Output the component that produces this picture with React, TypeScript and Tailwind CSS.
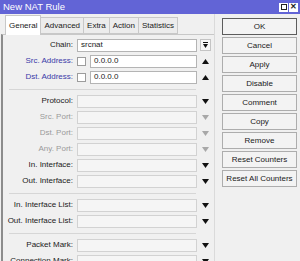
import React from "react";

type Row = { label: string; kind: "chain" | "addr" | "empty"; tone?: "blue" | "gray" | "black"; value?: string; arrow?: "down" | "up" | "downGray" };

const rowsA: Row[] = [
    { label: "Chain:", kind: "chain", value: "srcnat" },
    { label: "Src. Address:", kind: "addr", tone: "blue", value: "0.0.0.0", arrow: "up" },
    { label: "Dst. Address:", kind: "addr", tone: "blue", value: "0.0.0.0", arrow: "up" },
];

const rowsB: Row[] = [
    { label: "Protocol:", kind: "empty", arrow: "down" },
    { label: "Src. Port:", kind: "empty", tone: "gray", arrow: "downGray" },
    { label: "Dst. Port:", kind: "empty", tone: "gray", arrow: "downGray" },
    { label: "Any. Port:", kind: "empty", tone: "gray", arrow: "downGray" },
    { label: "In. Interface:", kind: "empty", arrow: "down" },
    { label: "Out. Interface:", kind: "empty", arrow: "down" },
];

const rowsC: Row[] = [
    { label: "In. Interface List:", kind: "empty", arrow: "down" },
    { label: "Out. Interface List:", kind: "empty", arrow: "down" },
];

const rowsD: Row[] = [
    { label: "Packet Mark:", kind: "empty", arrow: "down" },
    { label: "Connection Mark:", kind: "empty", arrow: "down" },
];

const buttons = ["OK", "Cancel", "Apply", "Disable", "Comment", "Copy", "Remove", "Reset Counters", "Reset All Counters"];

const tabs = ["General", "Advanced", "Extra", "Action", "Statistics"];

function Arrow({ dir }: { dir?: Row["arrow"] }) {
    if (!dir) return <div className="w-[17px]" />;
    const color = dir === "downGray" ? "#a8a8a8" : "#111111";
    return (
        <div className="w-[17px] flex justify-center items-center">
            <svg width="7" height="5" viewBox="0 0 7 5">
                {dir === "up" ? <polygon points="3.5,0 7,5 0,5" fill={color} /> : <polygon points="0,0 7,0 3.5,5" fill={color} />}
            </svg>
        </div>
    );
}

function FormRow({ row }: { row: Row }) {
    const labelColor = row.tone === "blue" ? "text-[#3a3aa8]" : row.tone === "gray" ? "text-[#9a9a9a]" : "text-[#1a1a1a]";
    return (
        <div className="flex items-center h-[16px]">
            <div className={`w-[71px] text-right pr-[1px] whitespace-nowrap ${labelColor}`}>{row.label}</div>
            <div className="w-[3px]" />
            {row.kind === "addr" && <div className="w-[9px] h-[9px] bg-white border border-[#9c9c9c] mr-[4px]" />}
            <div className={`flex-1 h-[13px] border flex items-center pl-[3px] ${row.kind === "empty" ? "bg-[#f5f5f5] border-[#d2d2d2]" : "bg-white border-[#b4b4b4]"}`}>
                {row.value}
            </div>
            {row.kind === "chain" ? (
                <div className="w-[17px] flex justify-center items-center">
                    <div className="w-[11px] h-[12px] border border-[#c4c4c4] bg-[#f7f7f7] flex flex-col items-center justify-center gap-[1px]">
                        <div className="w-[5px] h-[1px] bg-[#111]" />
                        <svg width="5" height="4" viewBox="0 0 5 4"><polygon points="0,0 5,0 2.5,4" fill="#111" /></svg>
                    </div>
                </div>
            ) : (
                <Arrow dir={row.arrow} />
            )}
        </div>
    );
}

function Sep() {
    return (
        <div className="h-[8px] flex items-center pl-[6px] pr-[18px]">
            <div className="w-full h-[1px] bg-[#d6d6d6]" />
        </div>
    );
}

export default function App() {
    return (
        <div className="w-[300px] h-[261px] overflow-hidden bg-[#f0f0f0] flex flex-col text-[8px] leading-none text-[#1a1a1a]" style={{ fontFamily: "'Liberation Sans', Arial, sans-serif" }}>
            <div className="h-[14px] bg-[#6264d6] flex items-center justify-between pl-[3px] pr-[2px]">
                <span className="text-white text-[9.5px]">New NAT Rule</span>
                <div className="flex gap-[1px]">
                    <div className="w-[9px] h-[9px] bg-white flex items-center justify-center">
                        <div className="w-[6px] h-[6px] border border-[#222]" />
                    </div>
                    <div className="w-[9px] h-[9px] bg-white flex items-center justify-center text-[8px] font-bold text-[#222]">✕</div>
                </div>
            </div>

            <div className="flex flex-1 min-h-0">
                <div className="w-[215px] flex flex-col border-r border-[#dadada]">
                    <div className="h-[20px] flex items-end pl-[5px] pt-[1px]">
                        {tabs.map((t, i) => (
                            <div
                                key={t}
                                className={
                                    i === 0
                                        ? "h-[20px] px-[3px] bg-white border border-b-0 border-[#c8c8c8] flex items-center relative top-[1px]"
                                        : "h-[17px] px-[3px] bg-[#ececec] border border-l-0 border-[#c8c8c8] flex items-center"
                                }
                            >
                                {t}
                            </div>
                        ))}
                    </div>
                    <div className="flex-1 border-t border-l-2 border-[#8c8c8c] border-t-[#c8c8c8] ml-[1px] pt-[2px]">
                        {rowsA.map((r) => <FormRow key={r.label} row={r} />)}
                        <Sep />
                        {rowsB.map((r) => <FormRow key={r.label} row={r} />)}
                        <Sep />
                        {rowsC.map((r) => <FormRow key={r.label} row={r} />)}
                        <Sep />
                        {rowsD.map((r) => <FormRow key={r.label} row={r} />)}
                    </div>
                </div>

                <div className="flex-1 flex flex-col gap-[2px] pt-[4px] pl-[7px] pr-[3px]">
                    {buttons.map((b, i) => (
                        <div
                            key={b}
                            className={`h-[17px] flex items-center justify-center whitespace-nowrap bg-[#f3f3f3] border ${i === 0 ? "border-[#5c5c5c]" : "border-[#adadad]"}`}
                        >
                            {b}
                        </div>
                    ))}
                </div>
            </div>
        </div>
    );
}
